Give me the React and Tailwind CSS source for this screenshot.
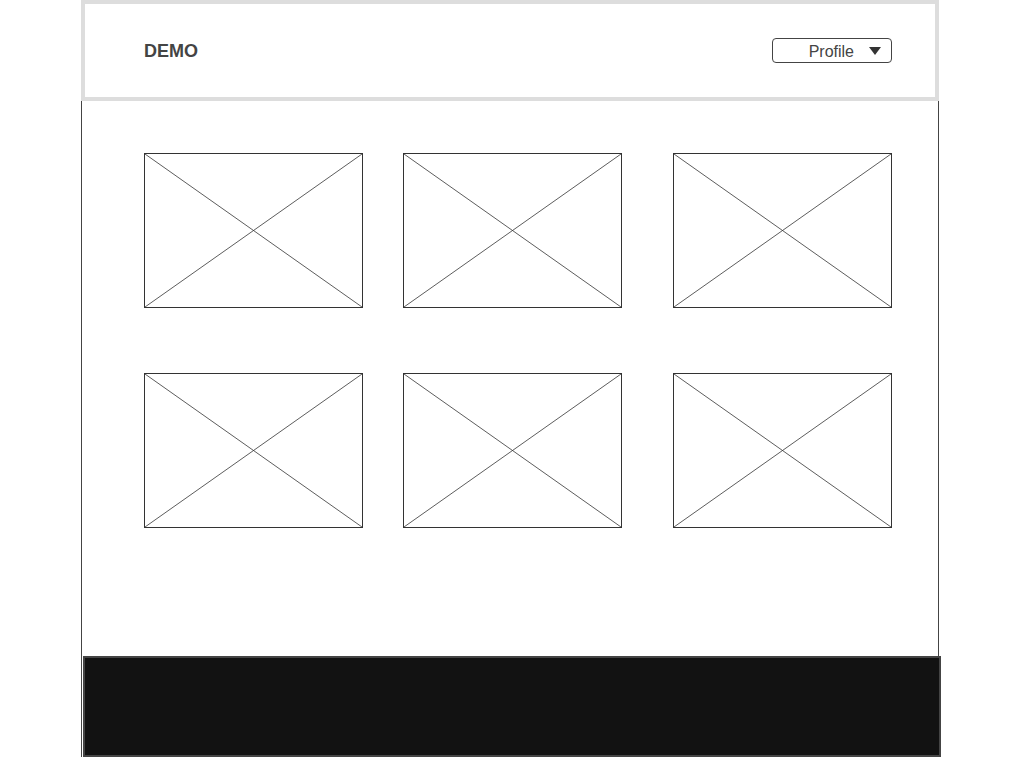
import React from "react";

function Placeholder() {
  return (
    <div className="w-[219px] h-[155px] border border-[#333] bg-white">
      <svg width="100%" height="100%" viewBox="0 0 217 153" preserveAspectRatio="none" className="block">
        <line x1="0" y1="0" x2="217" y2="153" stroke="#333" strokeWidth="0.8" />
        <line x1="217" y1="0" x2="0" y2="153" stroke="#333" strokeWidth="0.8" />
      </svg>
    </div>
  );
}

function Row() {
  return (
    <div className="flex">
      <Placeholder />
      <div className="ml-[40px]">
        <Placeholder />
      </div>
      <div className="ml-[51px]">
        <Placeholder />
      </div>
    </div>
  );
}

export default function App() {
  return (
    <div className="w-[1024px] h-[757px] bg-white font-['Liberation_Sans',Arial,sans-serif] overflow-hidden">
      <div className="ml-[81px] w-[858px]">
        {/* Header */}
        <div className="h-[101px] border-4 border-[#dddddd] flex items-center justify-between pl-[59px] pr-[43px]">
          <span className="text-[18px] font-bold text-[#444] leading-none mt-px">DEMO</span>
          <button className="w-[120px] h-[25px] rounded-[4px] border border-[#444] flex items-center justify-end pr-[10px] text-[16px] text-[#444] bg-white">
            <span className="leading-none mt-[3px]">Profile</span>
            <svg width="12" height="8" viewBox="0 0 12 8" className="ml-[15px]">
              <polygon points="0,0 12,0 6,8" fill="#333" />
            </svg>
          </button>
        </div>

        {/* Body + footer */}
        <div className="border-x border-[#444]">
          <div className="h-[555px] pl-[62px] pt-[52px] flex flex-col gap-[65px]">
            <Row />
            <Row />
          </div>
          <div className="ml-px w-[858px] h-[101px] border-2 border-[#444] bg-[#121212]" />
        </div>
      </div>
    </div>
  );
}
